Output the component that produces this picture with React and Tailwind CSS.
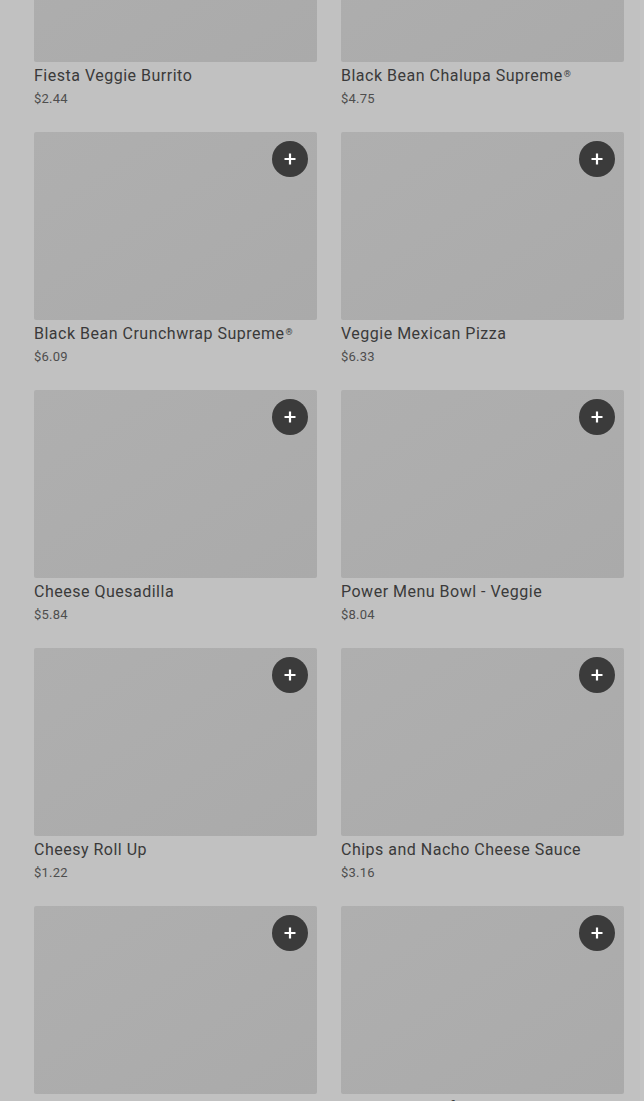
import React from 'react'

const items = [
  { name: 'Fiesta Veggie Burrito', price: '$2.44' },
  { name: 'Black Bean Chalupa Supreme®', price: '$4.75' },
  { name: 'Black Bean Crunchwrap Supreme®', price: '$6.09' },
  { name: 'Veggie Mexican Pizza', price: '$6.33' },
  { name: 'Cheese Quesadilla', price: '$5.84' },
  { name: 'Power Menu Bowl - Veggie', price: '$8.04' },
  { name: 'Cheesy Roll Up', price: '$1.22' },
  { name: 'Chips and Nacho Cheese Sauce', price: '$3.16' },
  { name: 'Nacho Fries', price: '$2.19' },
  { name: 'Black Bean Soft Taco Party', price: '$1.89' },
]

function PlusIcon() {
  return (
    <svg width="14" height="14" viewBox="0 0 14 14">
      <path d="M7 1.5v11M1.5 7h11" stroke="#fff" strokeWidth="2.2" />
    </svg>
  )
}

// trademark marks sit small and raised in the menu titles
function renderName(name) {
  if (!name.endsWith('®')) return name
  return (
    <>
      {name.slice(0, -1)}
      <sup className="text-[9px] ml-[1px] -top-[0.5em]">®</sup>
    </>
  )
}

function MenuCard({ item }) {
  return (
    <div className="flex flex-col">
      <div className="relative h-[188px] rounded-[2px] bg-gradient-to-br from-[#afafaf] to-[#aaaaaa]">
        <button className="absolute top-[9px] right-[9px] w-9 h-9 rounded-full bg-[#3b3b3b] flex items-center justify-center">
          <PlusIcon />
        </button>
      </div>
      <div className="pt-[3px] text-[16px] leading-[22px] text-[#3a3a3a] tracking-[0.5px] whitespace-nowrap">
        {renderName(item.name)}
      </div>
      <div className="pt-[2px] text-[13px] leading-[20px] text-[#4e4e4e] tracking-[0.2px]">
        {item.price}
      </div>
    </div>
  )
}

export default function App() {
  return (
    <div
      className="h-[1101px] overflow-hidden bg-[#c1c1c1] border-r-4 border-[#c4c4c4]"
      style={{ fontFamily: 'Roboto, "Liberation Sans", sans-serif' }}
    >
      <div className="-mt-[126px] pl-[34px] pr-[16px] grid grid-cols-2 gap-x-6 gap-y-[23px]">
        {items.map(item => (
          <MenuCard key={item.name} item={item} />
        ))}
      </div>
    </div>
  )
}
